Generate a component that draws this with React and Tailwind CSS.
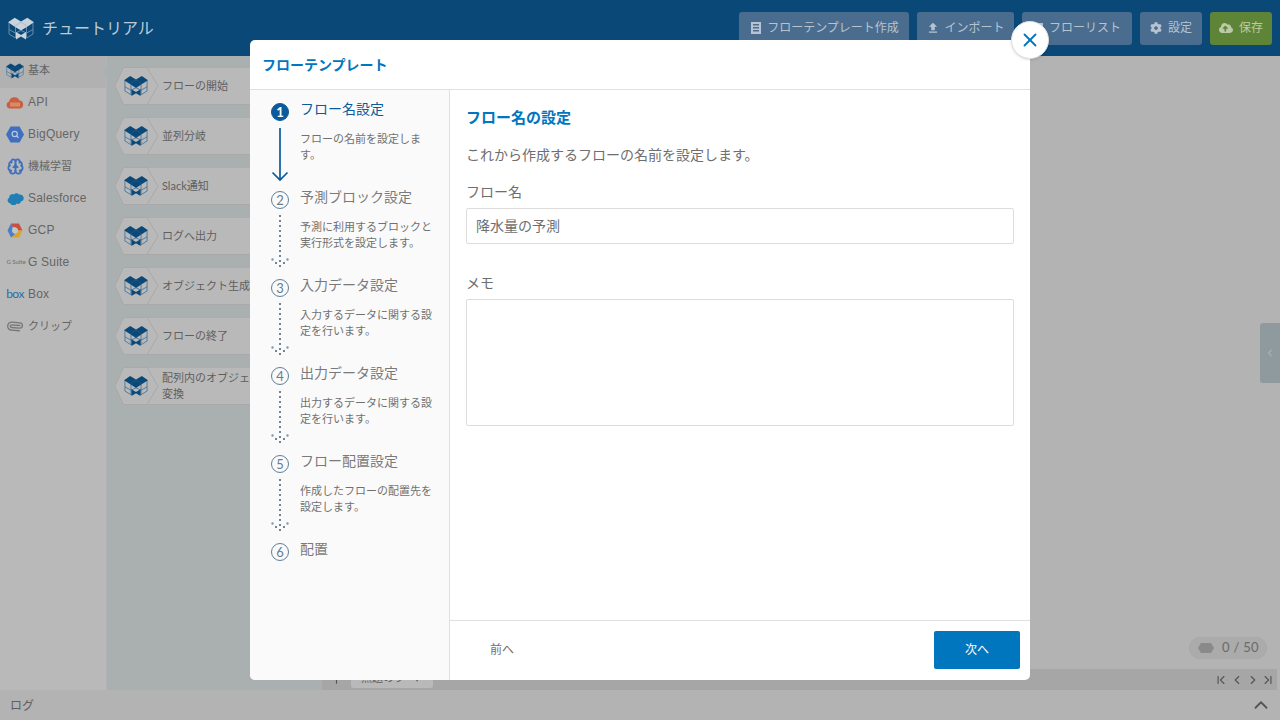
import React from "react";
import { ChevronUp, ChevronLeft, ChevronRight, ChevronFirst, ChevronLast, X, Brain, Paperclip, Plus } from "lucide-react";
import { FaCog, FaCloudUploadAlt } from "react-icons/fa";
import { MdFileUpload } from "react-icons/md";

function Logo({ top = "#0a4878", line = "#3f729b", className = "" }) {
  return (
    <svg viewBox="0 0 26 24" className={className} fill="none">
      <g stroke={line} strokeWidth="0.9">
        <path d="M1 7V18L7.5 22M25 7V18L18.5 22M7.5 11V22M18.5 11V22M1 13.5L7.5 17M25 13.5L18.5 17M7.5 17L13 14.5L18.5 17" />
      </g>
      <path d="M0 6.2L6.7 1.8L13 5.6L19.3 1.8L26 6.2L19.6 10.4L13 14.6L6.4 10.4Z M8 16L13 19V20.4L8 23.4Z M18 16L13 19V20.4L18 23.4Z" fill={top} />
      <path d="M6.7 10.2L13 6.2L19.3 10.2" stroke={line} strokeWidth="0.5" opacity="0.7" />
    </svg>
  );
}

function Hex() {
  return (
    <svg width="44" height="38" viewBox="0 0 44 38" className="absolute left-0 top-0">
      <path d="M8.5 .5H32L43 19L32 37.5H8.5L0 19Z" fill="#b9b9b9" stroke="#a9a9a9" />
    </svg>
  );
}

function Block({ children }) {
  return (
    <div className="relative h-[38px] w-[205px] shrink-0">
      <div className="ml-[30px] flex h-full items-center border-y border-t-[#adadad] border-b-[#a9a9a9] bg-[#b9b9b9] pl-[17px] text-[11px] leading-4 text-[#5f5f5f]">
        <span className="block w-[100px] shrink-0 whitespace-nowrap">{children}</span>
      </div>
      <Hex />
      <Logo className="absolute left-[9px] top-[7px] h-[23px] w-[24px]" />
    </div>
  );
}

function SideItem({ icon, label, active, jp }) {
  return (
    <div className={"relative flex h-8 items-center pb-1 " + (active ? "bg-[#b1b1b1]" : "")}>
      <span className="flex w-7 shrink-0 items-center justify-center pl-[2px]">{icon}</span>
      <span className={"whitespace-nowrap text-[#656565] " + (jp ? "text-[11px]" : "text-[12px] tracking-[.2px] font-['Liberation_Sans','Noto_Sans_CJK_JP',sans-serif]")}>{label}</span>
      {active && <span className="absolute right-[-3px] top-[13px] h-[6px] w-[6px] rotate-45 bg-[#aab0b0]" />}
    </div>
  );
}

function HeadBtn({ icon, label, w, green, gap = "gap-[6px]" }) {
  return (
    <div className={"flex h-[33px] items-center justify-center rounded-[3px] text-[12px] " + gap + " " + w + " " + (green ? "bg-[#5e8537] text-[#bccaa8]" : "bg-[#4a6d8f] text-[#b6c4d1]")}>
      {icon}
      <span className="whitespace-nowrap">{label}</span>
    </div>
  );
}

function Connector({ active }) {
  if (active) {
    return (
      <svg width="18" height="54" viewBox="0 0 18 54" className="mt-[7px] shrink-0" fill="none" stroke="#0a5a9c" strokeWidth="1.7">
        <path d="M9 0V52M1.5 44.5L9 52L16.5 44.5" />
      </svg>
    );
  }
  const dots = [];
  for (let y = 0; y <= 52; y += 5) dots.push(<rect key={y} x="8" y={y} width="2" height="2" />);
  const head = [[0.5, 43.5], [4, 47], [15.5, 43.5], [12, 47]];
  return (
    <svg width="18" height="56" viewBox="0 0 18 56" className="mt-[6px] shrink-0" fill="#6d8596">
      {dots}
      {head.map(([x, y]) => <rect key={x} x={x} y={y} width="2" height="2" />)}
    </svg>
  );
}

function Step({ n, title, lines, active, last }) {
  return (
    <div className="flex h-[88px] shrink-0 pl-[21px]">
      <div className="flex w-[18px] shrink-0 flex-col items-center">
        <div className={"flex h-[18px] w-[18px] shrink-0 items-center justify-center rounded-full border text-[13px] leading-none " + (active ? "border-[#0a5a9c] bg-[#0a5a9c] font-bold text-white" : "border-[#5f7f96] text-[#5f7f96]")}>{n}</div>
        {!last && <Connector active={active} />}
      </div>
      <div className="ml-[11px] mt-[-3px] min-w-0">
        <div className={"text-[14px] leading-[18px] " + (active ? "text-[#0a5a9c]" : "text-[#7a7a7a]")}>{title}</div>
        {lines && (
          <div className="mt-[13px] text-[11px] leading-4 text-[#707070]">
            {lines.map((l) => <div key={l} className="whitespace-nowrap">{l}</div>)}
          </div>
        )}
      </div>
    </div>
  );
}

export default function App() {
  const blocks = ["フローの開始", "並列分岐", "Slack通知", "ログへ出力", "オブジェクト生成", "フローの終了"];
  return (
    <div className="relative flex h-screen w-[1280px] flex-col overflow-hidden bg-[#b3b3b3] font-['Lato','Noto_Sans_CJK_JP',sans-serif]">
      <header className="flex h-14 shrink-0 items-center bg-[#0a4878] pl-2 pr-2">
        <Logo top="#c9d3dc" line="#6f93b0" className="h-[24px] w-[26px]" />
        <span className="ml-2 text-[16px] text-[#bccad6]">チュートリアル</span>
        <div className="ml-auto flex gap-2">
          <HeadBtn w="w-[170px] pl-[2px]" label="フローテンプレート作成" icon={
            <svg width="10" height="12" viewBox="0 0 10 12" fill="#b6c4d1"><path d="M0 0H10V12H0ZM2 2V3.5H8V2ZM2 5V6.5H8V5ZM2 8V9.5H8V8Z" fillRule="evenodd" /></svg>
          } />
          <HeadBtn w="w-[97px]" gap="gap-[4px]" label="インポート" icon={<MdFileUpload size={14} />} />
          <HeadBtn w="w-[110px]" label="フローリスト" icon={<span className="h-[10px] w-[10px] bg-[#b6c4d1]" />} />
          <HeadBtn w="w-[62px]" label="設定" icon={<FaCog size={12} />} />
          <HeadBtn w="w-[62px]" green label="保存" icon={<FaCloudUploadAlt size={14} />} />
        </div>
      </header>

      <main className="flex min-h-0 flex-1">
        <nav className="w-[106px] shrink-0 bg-[#b9b9b9]">
          <SideItem active jp label="基本" icon={<Logo className="h-[17px] w-[18px]" />} />
          <SideItem label="API" icon={
            <svg width="18" height="13" viewBox="0 0 18 13"><path d="M4 12.5A3.5 3.5 0 0 1 3 5.7A5.5 5.5 0 0 1 13.5 4.6A4 4 0 0 1 14 12.5Z" fill="#c9603c" /><rect x="4" y="6.5" width="10" height="4" fill="#d98a6d" /></svg>
          } />
          <SideItem label="BigQuery" icon={
            <svg width="18" height="17" viewBox="0 0 18 17"><path d="M4.5 .5H13.5L18 8.5L13.5 16.5H4.5L0 8.5Z" fill="#3f6fbe" /><circle cx="8.7" cy="8" r="2.6" fill="none" stroke="#b9c8e0" strokeWidth="1.2" /><path d="M10.6 10L12.5 11.8" stroke="#b9c8e0" strokeWidth="1.2" /></svg>
          } />
          <SideItem jp label="機械学習" icon={<Brain size={17} color="#3f6fbe" strokeWidth={2.6} />} />
          <SideItem label="Salesforce" icon={
            <svg width="17" height="13" viewBox="0 0 17 13"><path d="M3.5 11.5A3 3 0 0 1 2.3 5.8A3.2 3.2 0 0 1 7 2.5A3.2 3.2 0 0 1 12 2.6A3.6 3.6 0 0 1 14 9.6A3 3 0 0 1 9.5 11.4A3.3 3.3 0 0 1 3.5 11.5Z" fill="#1f7fb5" /></svg>
          } />
          <SideItem label="GCP" icon={
            <svg width="16" height="15" viewBox="0 0 16 15">
              <path d="M4 .5H12L15.5 7.5H11L8 4H5.5Z" fill="#c9503f" />
              <path d="M.5 7.5L4 .5L5.7 4L5 7.5L8 11.5L4 14.5Z" fill="#4a7fc9" />
              <path d="M4 14.5H12L15.5 7.5H11L8 11.5Z" fill="#d9a62a" />
              <circle cx="8" cy="7.5" r="3" fill="#c4c4c4" />
            </svg>
          } />
          <SideItem label="G Suite" icon={<span className="whitespace-nowrap pl-[2px] text-[6px] leading-none text-[#6c6c6c]">G Suite</span>} />
          <SideItem label="Box" icon={<span className="text-[12px] leading-none tracking-[-0.5px] text-[#1f6ea8]">box</span>} />
          <SideItem jp label="クリップ" icon={<Paperclip size={16} color="#777" className="rotate-[50deg]" />} />
        </nav>

        <section className="flex w-[216px] shrink-0 flex-col gap-3 overflow-hidden border-l border-[#b0b4b4] bg-[#aab0b0] pl-2 pt-[11px]">
          {blocks.map((b) => <Block key={b}>{b}</Block>)}
          <Block>配列内のオブジェクトを<br />変換</Block>
        </section>

        <section className="relative flex flex-1 flex-col justify-end">
          <div className="mr-[3px] flex h-[21px] items-center bg-[#a6a6a6]">
            <Plus size={13} color="#555" className="ml-2" />
            <div className="ml-[8px] flex h-[19px] w-[82px] items-center gap-1 self-start rounded-b-[3px] bg-[#b9b9b9] pl-[10px] text-[11px] text-[#5f5f5f]"><span>無題のフ</span><span className="ml-[6px] text-[8px]">▾</span></div>
            <div className="ml-auto flex items-center gap-[1px] pr-[2px] text-[#555]">
              <ChevronFirst size={14} />
              <ChevronLeft size={14} className="ml-[1px]" />
              <ChevronRight size={14} className="ml-[1px]" />
              <ChevronLast size={14} />
            </div>
          </div>
          <div className="absolute bottom-[31px] right-[13px] flex h-[22px] w-[78px] items-center rounded-full bg-[#ababab] pl-[9px] text-[13px] text-[#6a6a6a]">
            <svg width="16" height="10" viewBox="0 0 16 10" fill="#8a8a8a"><path d="M3 0H13L16 5L13 10H3L0 5Z" /></svg>
            <span className="ml-2 tracking-[.3px]">0 / 50</span>
          </div>
          <div className="absolute right-0 top-[267px] flex h-[60px] w-[20px] items-center justify-center rounded-l-[3px] bg-[#8f9a9f]">
            <ChevronLeft size={12} color="#b8bec2" />
          </div>
        </section>
      </main>

      <footer className="flex h-[30px] shrink-0 items-center justify-between bg-[#b3b3b3] pl-[10px] pr-2 text-[12px] text-[#5f5f5f]">
        <span className="pt-[1px]">ログ</span>
        <ChevronUp size={22} color="#555" />
      </footer>

      <div className="absolute left-[250px] top-[40px] flex h-[640px] w-[780px] flex-col rounded-[5px] bg-white">
        <div className="flex h-[50px] shrink-0 items-center border-b border-[#e0e0e0] pl-3 text-[14px] font-bold text-[#0076c0]">フローテンプレート</div>
        <div className="flex min-h-0 flex-1">
          <aside className="w-[200px] shrink-0 overflow-hidden rounded-bl-[5px] border-r border-[#e0e0e0] bg-[#fafafa] pt-[13px]">
            <Step n="1" active title="フロー名設定" lines={["フローの名前を設定しま", "す。"]} />
            <Step n="2" title="予測ブロック設定" lines={["予測に利用するブロックと", "実行形式を設定します。"]} />
            <Step n="3" title="入力データ設定" lines={["入力するデータに関する設", "定を行います。"]} />
            <Step n="4" title="出力データ設定" lines={["出力するデータに関する設", "定を行います。"]} />
            <Step n="5" title="フロー配置設定" lines={["作成したフローの配置先を", "設定します。"]} />
            <Step n="6" last title="配置" />
          </aside>
          <div className="flex min-w-0 flex-1 flex-col">
            <div className="flex-1 px-4 pt-[16px]">
              <h2 className="text-[15px] font-bold leading-[22px] text-[#0076c0]">フロー名の設定</h2>
              <p className="mt-[17px] text-[14px] leading-[20px] text-[#6e6e6e]">これから作成するフローの名前を設定します。</p>
              <label className="mt-[17px] block text-[14px] leading-[20px] text-[#6e6e6e]">フロー名</label>
              <div className="mt-[6px] flex h-[36px] items-center rounded-[2px] border border-[#ddd] px-[9px] pb-[2px] text-[14px] text-[#6e6e6e]">降水量の予測</div>
              <label className="mt-[29px] block text-[14px] leading-[20px] text-[#6e6e6e]">メモ</label>
              <div className="mt-[6px] h-[127px] rounded-[2px] border border-[#ddd]" />
            </div>
            <div className="flex h-[60px] shrink-0 items-center justify-between border-t border-[#e0e0e0] pb-[2px] pl-[40px] pr-[10px]">
              <span className="text-[12px] text-[#707070]">前へ</span>
              <div className="flex h-[38px] w-[86px] items-center justify-center rounded-[2px] bg-[#0076be] text-[12px] text-white">次へ</div>
            </div>
          </div>
        </div>
        <div className="absolute right-[-19px] top-[-19px] flex h-[38px] w-[38px] items-center justify-center rounded-full border border-[#e0e0e0] bg-white shadow-sm">
          <X size={22} color="#0076c0" strokeWidth={2} />
        </div>
      </div>
    </div>
  );
}
